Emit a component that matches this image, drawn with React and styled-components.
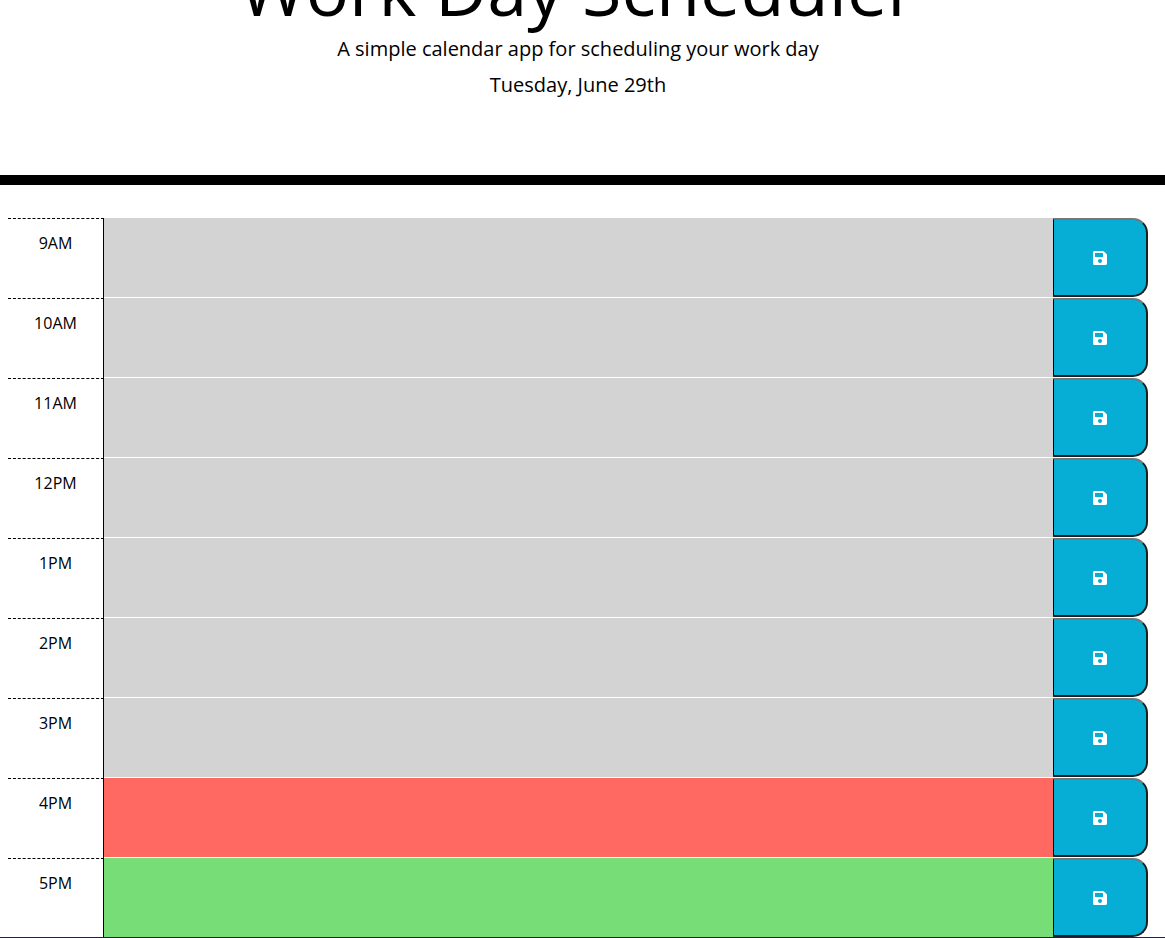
import React from "react";
import styled, { createGlobalStyle } from "styled-components";

const Global = createGlobalStyle`
  html, body { margin: 0; padding: 0; background: #fff; height: 938px; overflow: hidden; }
  * { box-sizing: border-box; }
  body { font-family: "Open Sans", sans-serif; color: #000; }
`;

const Header = styled.header`
  height: 185px;
  padding-right: 9px;
  border-bottom: 10px solid #000;
  text-align: center;
  overflow: hidden;
`;
const Title = styled.h1`
  margin: -55px 0 0;
  font-size: 72px;
  font-weight: 400;
  line-height: 86px;
`;
const Lead = styled.p`
  margin: 0;
  font-size: 20px;
  font-weight: 400;
  line-height: 30px;
  padding-top: 3px;
`;
const DateLine = styled(Lead)`
  padding-top: 6px;
`;
const Planner = styled.main`
  height: 719px;
  margin: 33px 17px 0 8px;
  overflow: hidden;
`;
const BottomRule = styled.div`
  height: 1px;
  background: #2b1a56;
`;
const Row = styled.section`
  display: grid;
  grid-template-columns: 96px 1fr 95px;
  height: 80px;
`;
const Hour = styled.div`
  border-top: 1px dashed #000;
  border-right: 1px solid #000;
  padding-top: 12px;
  text-align: center;
  font-size: 16px;
  line-height: 24px;
`;
const statusColors = { past: "#d3d3d3", present: "#ff6961", future: "#77dd77" };
const Note = styled.textarea`
  display: block;
  width: 100%;
  height: 80px;
  border: 0;
  border-bottom: 1px solid #fff;
  outline: 0;
  padding: 0;
  resize: none;
  background: ${(p) => statusColors[p.$status]};
`;
const Save = styled.button`
  display: flex;
  align-items: center;
  justify-content: center;
  height: 79px;
  padding: 0;
  background: #06aed5;
  color: #fff;
  border-style: solid;
  border-width: 2px 2px 2px 1px;
  border-color: #767676 #1f1f1f #1f1f1f #000;
  border-radius: 0 15px 15px 0;
`;

const SaveIcon = () => (
  <svg width="16" height="16" viewBox="0 0 448 512" fill="currentColor" aria-hidden="true">
    <path d="M433.941 129.941l-83.882-83.882A48 48 0 0 0 316.118 32H48C21.49 32 0 53.49 0 80v352c0 26.51 21.49 48 48 48h352c26.51 0 48-21.49 48-48V163.882a48 48 0 0 0-14.059-33.941zM224 416c-35.346 0-64-28.654-64-64 0-35.346 28.654-64 64-64s64 28.654 64 64c0 35.346-28.654 64-64 64zm96-304.52V212c0 6.627-5.373 12-12 12H76c-6.627 0-12-5.373-12-12V108c0-6.627 5.373-12 12-12h228.52c3.183 0 6.235 1.264 8.485 3.515l3.48 3.48A11.996 11.996 0 0 1 320 111.48z" />
  </svg>
);

const hours = [
  ["9AM", "past"], ["10AM", "past"], ["11AM", "past"], ["12PM", "past"], ["1PM", "past"],
  ["2PM", "past"], ["3PM", "past"], ["4PM", "present"], ["5PM", "future"],
];

export default function App() {
  return (
    <>
      <Global />
      <Header>
        <Title>Work Day Scheduler</Title>
        <Lead>A simple calendar app for scheduling your work day</Lead>
        <DateLine>Tuesday, June 29th</DateLine>
      </Header>
      <Planner>
        {hours.map(([label, status]) => (
          <Row key={label}>
            <Hour>{label}</Hour>
            <Note $status={status} />
            <Save aria-label={`Save ${label}`}><SaveIcon /></Save>
          </Row>
        ))}
      </Planner>
      <BottomRule />
    </>
  );
}
